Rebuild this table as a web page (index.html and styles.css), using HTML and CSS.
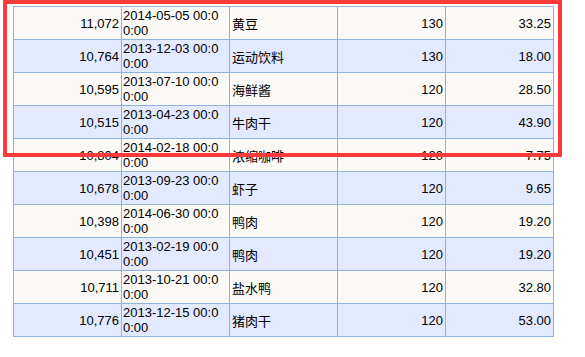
FILE: index.html
```html
<!DOCTYPE html>
<html lang="zh">
<head>
<meta charset="utf-8">
<link rel="stylesheet" href="styles.css">
</head>
<body>
<div class="stage">
  <table class="grid">
    <colgroup><col class="c"><col class="c"><col class="c"><col class="c"><col class="c"></colgroup>
    <tbody>
      <tr class="odd"><td class="num">11,072</td><td class="date">2014-05-05 00:0<br>0:00</td><td class="name">黄豆</td><td class="num">130</td><td class="num">33.25</td></tr>
      <tr class="even"><td class="num">10,764</td><td class="date">2013-12-03 00:0<br>0:00</td><td class="name">运动饮料</td><td class="num">130</td><td class="num">18.00</td></tr>
      <tr class="odd"><td class="num">10,595</td><td class="date">2013-07-10 00:0<br>0:00</td><td class="name">海鲜酱</td><td class="num">120</td><td class="num">28.50</td></tr>
      <tr class="even"><td class="num">10,515</td><td class="date">2013-04-23 00:0<br>0:00</td><td class="name">牛肉干</td><td class="num">120</td><td class="num">43.90</td></tr>
      <tr class="odd"><td class="num">10,804</td><td class="date">2014-02-18 00:0<br>0:00</td><td class="name">浓缩咖啡</td><td class="num">120</td><td class="num">7.75</td></tr>
      <tr class="even"><td class="num">10,678</td><td class="date">2013-09-23 00:0<br>0:00</td><td class="name">虾子</td><td class="num">120</td><td class="num">9.65</td></tr>
      <tr class="odd"><td class="num">10,398</td><td class="date">2014-06-30 00:0<br>0:00</td><td class="name">鸭肉</td><td class="num">120</td><td class="num">19.20</td></tr>
      <tr class="even"><td class="num">10,451</td><td class="date">2013-02-19 00:0<br>0:00</td><td class="name">鸭肉</td><td class="num">120</td><td class="num">19.20</td></tr>
      <tr class="odd"><td class="num">10,711</td><td class="date">2013-10-21 00:0<br>0:00</td><td class="name">盐水鸭</td><td class="num">120</td><td class="num">32.80</td></tr>
      <tr class="even"><td class="num">10,776</td><td class="date">2013-12-15 00:0<br>0:00</td><td class="name">猪肉干</td><td class="num">120</td><td class="num">53.00</td></tr>
    </tbody>
  </table>
  <div class="highlight"></div>
</div>
</body>
</html>
```

FILE: styles.css
```css
html, body {
  margin: 0;
  padding: 0;
  background: #ffffff;
}

.stage {
  position: relative;
  width: 585px;
  height: 357px;
  padding: 6px 0 0 13px;
  box-sizing: border-box;
}

.grid {
  border-collapse: collapse;
  table-layout: fixed;
  width: 541px;
  font-family: "Liberation Sans", Arial, "Noto Sans CJK SC", sans-serif;
  font-size: 13px;
  line-height: 15px;
  color: #000000;
}

.grid .c {
  width: 108px;
}

.grid td {
  border: 1px solid #8db2e3;
  height: 32px;
  padding: 1px 2px 1px 1px;
  box-sizing: border-box;
  vertical-align: middle;
  white-space: nowrap;
  overflow: hidden;
}

.grid tr.odd td {
  background: #faf9f5;
}

.grid tr.even td {
  background: #e3eaff;
}

.grid td.num {
  text-align: right;
}

.grid td.date {
  text-align: left;
}

.grid td.name {
  text-align: left;
  padding-left: 2px;
  padding-top: 2px;
  font-family: "Noto Sans CJK SC", "Liberation Sans", sans-serif;
}

.highlight {
  position: absolute;
  left: 3px;
  top: 0;
  width: 559px;
  height: 157px;
  border: 4px solid #fb3b3b;
  box-sizing: border-box;
  pointer-events: none;
}
```
